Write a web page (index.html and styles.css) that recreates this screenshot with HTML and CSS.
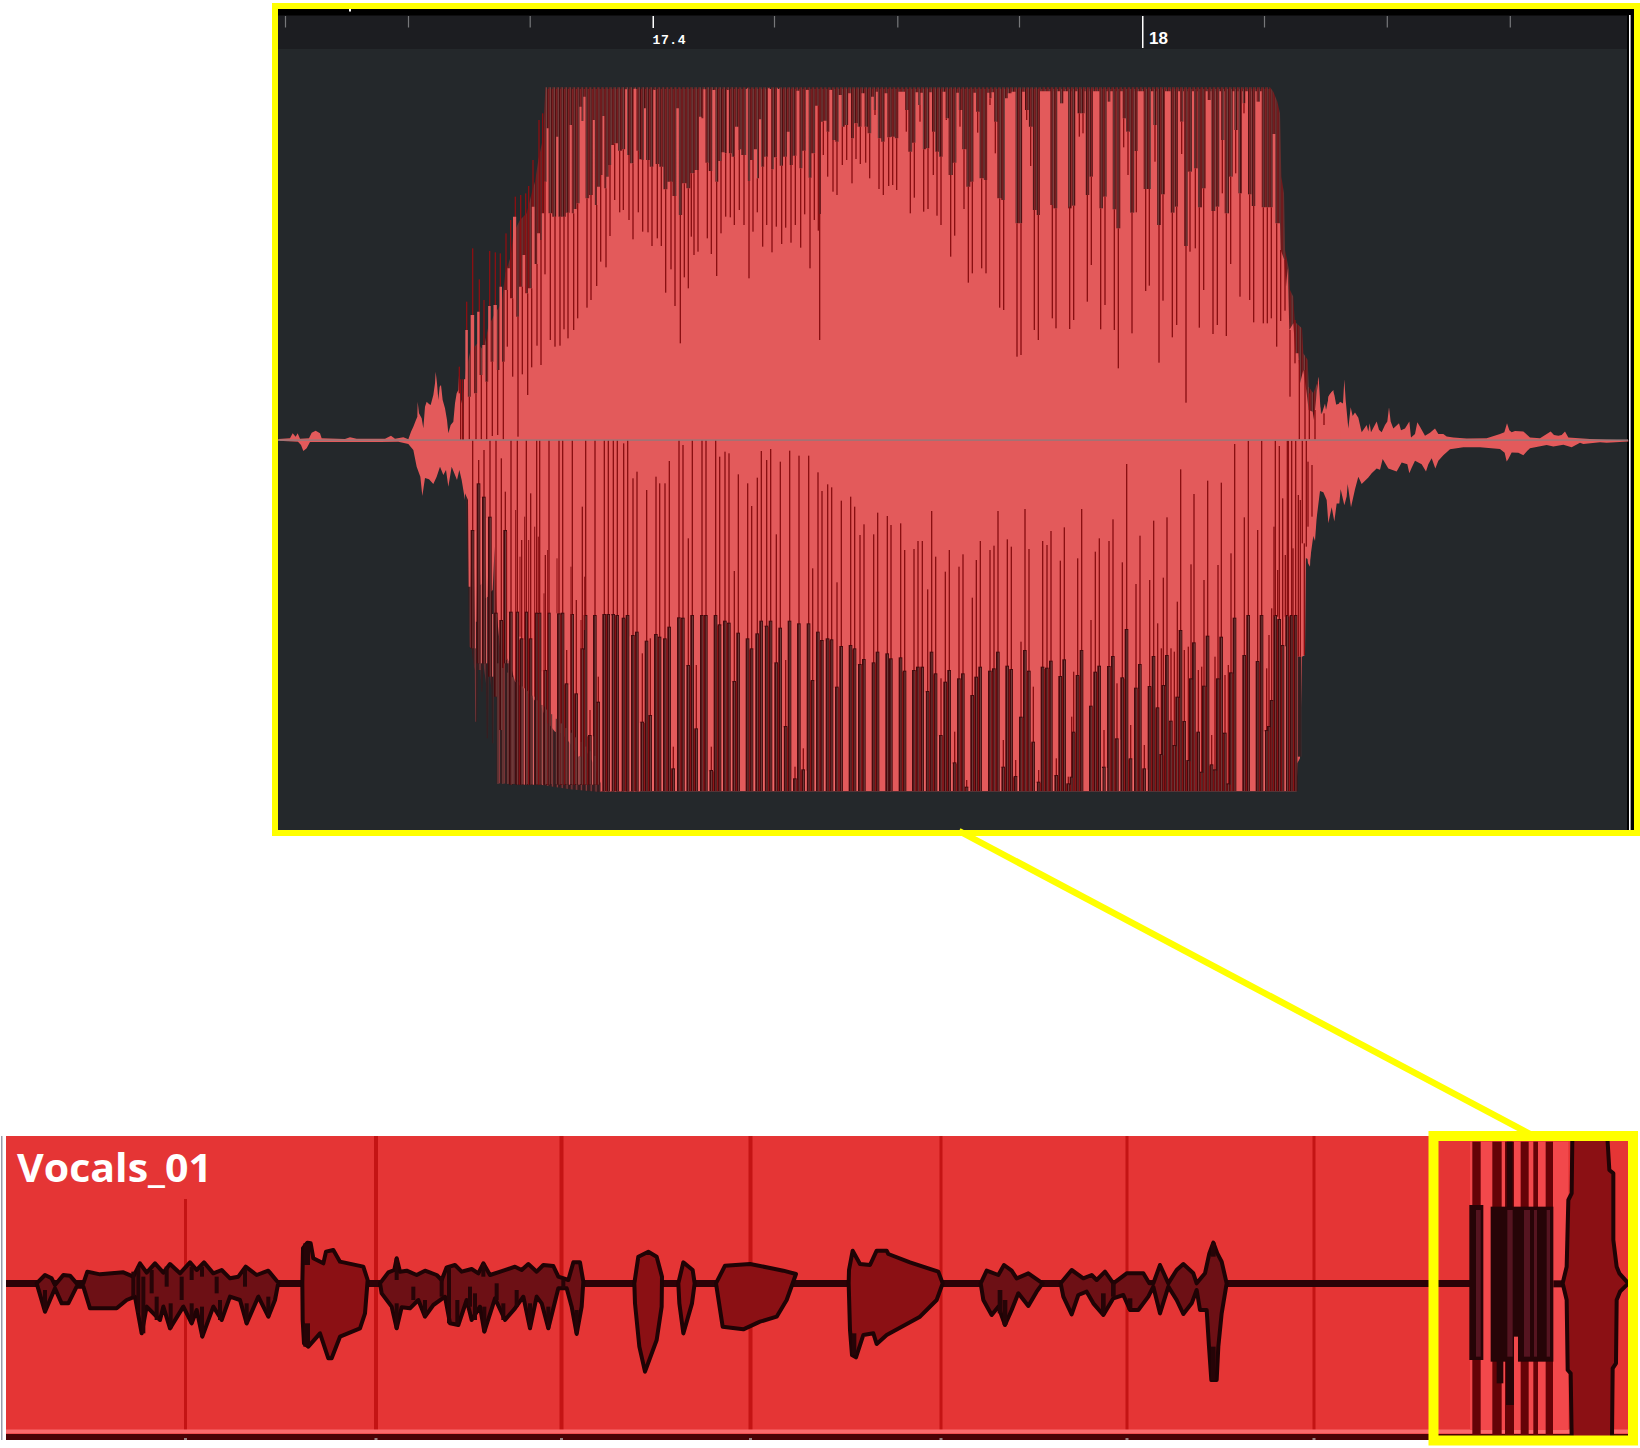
FILE: index.html
```html
<!DOCTYPE html>
<html lang="en">
<head>
<meta charset="utf-8">
<title>Vocals_01</title>
<link rel="stylesheet" href="styles.css">
</head>
<body>
<main class="page">
  <section class="detail">
    <svg class="detail-view" viewBox="278 9 1356 821" id="detail">
      <defs>
        <pattern id="stripes" width="12.15" height="40" patternUnits="userSpaceOnUse">
          <rect width="12.15" height="40" fill="#480a0d"/>
          <rect x="1" width="4" height="40" fill="#744240"/>
          <rect x="8" width="2.8" height="40" fill="#9b2c2e"/>
        </pattern>
        <pattern id="sparse" width="14.5" height="40" patternUnits="userSpaceOnUse">
          <rect width="14.5" height="40" fill="#2b2022"/>
          <rect x="2" width="4" height="40" fill="#8a383b"/>
          <rect x="10" width="2" height="40" fill="#4b1519"/>
        </pattern>
      </defs>
      <rect class="black" x="278" y="9" width="1356" height="821"/>
      <rect class="ruler" x="278" y="15.5" width="1349" height="34"/>
      <rect class="canvas" x="278" y="49" width="1349" height="781"/>
      <rect class="white" x="349" y="9" width="2" height="2.5"/>
      <g id="ticks"></g>
      <text class="beat" x="652.5" y="43.5" textLength="33">17.4</text>
      <text class="bar" x="1149" y="44" textLength="19">18</text>
      <g id="wave"></g>
      <rect class="zero" x="278" y="439.4" width="1350" height="1.4"/>
      <rect class="white" x="1629" y="15" width="1.6" height="815"/>
    </svg>
  </section>
  <section class="track">
    <svg class="track-view" viewBox="0 1136 1640 304" id="track">
      <rect class="edge" x="1" y="1136" width="1.5" height="304"/>
      <rect class="region" x="6" y="1136" width="1630" height="304"/>
      <g id="grid"></g>
      <rect class="lip" x="6" y="1429.5" width="1630" height="4"/>
      <rect class="base" x="6" y="1434" width="1630" height="6"/>
      <g id="dots"></g>
      <rect class="silence" x="6" y="1280" width="1490" height="7"/>
      <g id="clip"></g>
      <text class="name" x="17" y="1181.5" textLength="195" lengthAdjust="spacingAndGlyphs">Vocals_01</text>
    </svg>
  </section>
  <svg class="callout" viewBox="0 0 1640 1448">
    <path d="M959 831 L1530 1134"/>
    <rect x="1433.5" y="1136" width="199.5" height="304.5"/>
  </svg>
</main>
<script src="wave.js"></script>
</body>
</html>
```

FILE: styles.css
```css
body {
  margin: 0;
  background: #fff;
  overflow: hidden;
}

.page {
  position: relative;
  display: flex;
  flex-direction: column;
  width: 1640px;
  height: 1448px;
}

.detail {
  box-sizing: border-box;
  width: 1368px;
  height: 833px;
  margin: 3px 0 0 272px;
  border: 6px solid #ffff00;
}

.detail-view {
  display: block;
  width: 1356px;
  height: 821px;
}

.track {
  height: 304px;
  margin-top: 300px;
}

.track-view {
  display: block;
  width: 1640px;
  height: 304px;
}

.callout {
  position: absolute;
  inset: 0;
  width: 1640px;
  height: 1448px;
  fill: none;
  stroke: #ffff00;
}

.callout path { stroke-width: 6.5; }
.callout rect { stroke-width: 10; }

.black { fill: #000; }
.white { fill: #fff; }
.ruler { fill: #1c1d21; }
.canvas { fill: #24282b; }
.tick { fill: #77787b; }
.zero { fill: #95797a; }

.beat, .bar {
  fill: #fff;
  font: bold 13px "Liberation Mono", monospace;
}

.bar {
  font: bold 17px "Liberation Sans", sans-serif;
}

.light { fill: #e35a5b; }
.sides { fill: #e35a5b; }
.dark { fill: url(#stripes); }
.fade { fill: url(#sparse); }
.needle { fill: #8a0f12; }
.void { fill: #24282b; }
.column { fill: #450a0d; }
.core { fill: #6e3a39; }
.shine { fill: #ee6b6b; }

.edge { fill: #9a9dab; }
.region { fill: #e53535; }
.grid { fill: #c41414; }
.lip { fill: #fb6a6c; }
.base { fill: #4a0205; }
.dot { fill: #9c8080; }
.silence { fill: #2c0207; }

.blob {
  fill: #8b1014;
  stroke: #1f0305;
  stroke-width: 12;
  stroke-linejoin: round;
}

.busy { fill: #6d1015; }
.halo { fill: #f2484b; }
.stem { fill: #650307; }
.block { fill: #260407; }
.seam { fill: #551420; }

.name {
  fill: #fff;
  font: bold 40px "Open Sans", "Noto Sans", sans-serif;
}
```

FILE: wave.js
```js
const NS = 'http://www.w3.org/2000/svg';
const byId = id => document.getElementById(id);

function add(parent, tag, attrs) {
  const el = document.createElementNS(NS, tag);
  for (const k in attrs) el.setAttribute(k, attrs[k]);
  parent.appendChild(el);
  return el;
}
const rect = (p, cls, x, y, w, h) => add(p, 'rect', { class: cls, x, y, width: w, height: Math.max(h, 0) });
const poly = (p, cls, points) => add(p, 'polygon', { class: cls, points });
// A tile holds samples at three units per pixel.
const tile = (p, x, y, sy = 1 / 3) => add(p, 'g', { transform: `translate(${x} ${y}) scale(${1 / 3} ${sy})` });
const pairs = s => s.trim().split(/\s+/).map(t => t.split(',').map(Number));

// Ruler
[285.5, 408.5, 530.2, 774.5, 897.8, 1019.5, 1264.5, 1387.3, 1510.3].forEach(x => rect(byId('ticks'), 'tick', x - .6, 16, 1.2, 11.5));
rect(byId('ticks'), 'white', 652.5, 16, 1.5, 12);
rect(byId('ticks'), 'white', 1142, 16, 1.5, 32);

const wave = byId('wave');

// Each value holds to the midpoint between neighbouring samples.
function steps(g, data, end, floor, cls) {
  let d = `${data[0][0]},${floor}`;
  data.forEach(([x, y], i) => {
    const a = i ? (data[i - 1][0] + x) / 2 : x;
    const b = i < data.length - 1 ? (x + data[i + 1][0]) / 2 : end;
    d += ` ${a},${y} ${b},${y}`;
  });
  poly(g, cls, d + ` ${end},${floor}`);
}
function needlesDown(g, data, top) {
  data.forEach(([x, y]) => rect(g, 'needle', x - 2, top(x), 4, y - top(x)));
}
const nearest = data => x => {
  let best = data[0];
  data.forEach(p => { if (Math.abs(p[0] - x) < Math.abs(best[0] - x)) best = p; });
  return best[1];
};
function spikes(g, cls, data, floor, w) {
  data.forEach(([x, y]) => rect(g, cls, x - w / 2, Math.min(y, floor), w, Math.abs(floor - y)));
}

// Quiet lead-in and tail
const lead = tile(wave, 265, 0);
poly(lead, 'sides', '40,1317 75,1315 83,1300 92,1310 98,1300 105,1316 132,1315 140,1298 152,1292 165,1300 170,1315 240,1317 255,1312 275,1316 360,1316 378,1307 390,1316 415,1312 430,1318 438,1295 445,1280 452,1262 457,1250 458,1205 462,1240 470,1255 475,1285 480,1220 485,1205 492,1212 497,1215 505,1185 510,1150 512,1115 516,1150 520,1200 524,1160 528,1155 533,1200 540,1225 546,1260 550,1300 557,1275 565,1265 570,1210 575,1180 580,1170 583,1105 586,1190 592,1215 600,1320 600,1500 590,1440 583,1410 576,1440 560,1400 550,1460 543,1410 535,1425 525,1400 515,1430 505,1452 492,1438 480,1434 472,1488 466,1430 455,1400 445,1350 430,1332 400,1325 345,1326 240,1326 135,1326 125,1345 115,1353 108,1335 99,1325 40,1322');

const tail = tile(wave, 1300, 0, 1 / 2.8);
poly(tail, 'sides', '-10,1080 0,1000 5,1040 12,1040 18,1100 25,1150 35,1140 45,1150 50,1100 55,1055 58,1130 65,1160 75,1130 80,1160 85,1110 97,1095 103,1105 110,1140 120,1125 129,1130 133,1062 137,1120 145,1200 152,1140 158,1165 165,1155 175,1170 185,1210 200,1190 205,1208 209,1185 213,1210 230,1180 237,1203 245,1210 255,1190 262,1180 267,1140 272,1180 280,1200 297,1185 303,1205 315,1200 328,1180 333,1225 345,1215 352,1182 360,1195 375,1220 390,1212 405,1200 415,1215 430,1215 440,1222 460,1225 500,1228 560,1227 600,1215 613,1210 621,1185 628,1205 635,1210 645,1207 670,1208 690,1225 720,1227 752,1208 762,1218 775,1220 785,1218 795,1208 805,1225 870,1229 920,1231 985,1233 985,1236 920,1240 900,1238 850,1243 840,1240 815,1252 790,1245 760,1250 740,1246 690,1255 682,1262 670,1275 655,1268 635,1267 625,1285 620,1292 614,1268 600,1257 540,1252 490,1252 450,1258 430,1275 415,1290 406,1312 395,1283 385,1300 378,1320 365,1300 345,1290 335,1310 328,1325 322,1300 305,1295 290,1320 265,1312 248,1285 240,1315 230,1312 215,1325 205,1337 185,1355 175,1335 165,1370 153,1420 143,1355 140,1390 133,1415 122,1370 118,1410 110,1410 103,1460 95,1420 85,1465 80,1400 70,1378 60,1375 50,1450 45,1515 40,1500 30,1568 12,1560 0,1600 -10,1500');

// Upper half, first third
let g = tile(wave, 440, 60);
poly(g, 'dark', '68,1140 70,1000 78,930 92,870 104,860 112,850 130,870 145,800 165,760 185,730 196,640 212,590 220,520 240,480 260,460 275,400 285,365 295,300 310,230 316,82 900,82 900,1140');
spikes(g, 'needle', pairs('58,920 80,725 98,565 118,658 132,720 149,573 166,577 181,580 198,520 212,480 226,410 242,405 257,400 266,378 279,300 297,180 308,160'), 1000, 4);
const body1 = pairs('72,958 80,810 87,1010 97,765 108,1000 115,755 122,945 132,855 140,965 149,738 155,905 166,735 175,930 182,680 190,905 198,690 207,625 213,715 225,470 232,770 242,680 253,585 258,700 270,685 281,440 286,612 297,520 303,540 308,460 317,365 323,205 328,460 345,470 352,230 358,470 370,470 385,458 393,195 398,460 405,447 415,430 422,140 427,183 433,110 440,415 455,405 462,180 467,435 475,380 485,345 490,168 496,385 502,350 510,315 517,255 528,250 540,272 553,268 558,88 564,285 575,310 587,86 592,272 600,298 609,300 615,145 621,300 637,320 643,90 650,312 665,320 675,388 690,365 705,408 713,145 720,465 733,370 745,385 757,340 772,330 782,170 787,175 793,88 800,308 812,333 822,90 830,365 840,303 850,277 858,280 863,90 870,280 880,290 890,200 900,270');
steps(g, body1, 901, 1140, 'light');
needlesDown(g, pairs('62,1140 68,1140 88,1138 108,1138 124,1138 140,1138 157,1128 173,1125 190,1138 202,860 218,950 234,1130 247,943 263,1005 275,922 291,857 303,915 315,643 331,840 345,860 360,857 372,808 384,835 401,810 413,775 441,743 453,720 470,678 482,605 498,622 510,528 524,420 539,457 550,450 567,480 579,538 595,457 608,515 624,517 636,558 652,535 664,558 677,698 693,628 705,738 721,850 733,652 745,685 754,530 762,585 774,575 802,535 814,582 830,648 843,520 857,470 871,472 883,495 898,450'), nearest(body1));

// Upper half, middle
g = tile(wave, 740, 60);
rect(g, 'dark', 0, 82, 900, 500);
const body2 = pairs('0,268 7,285 16,285 21,85 26,363 35,300 48,268 54,355 60,178 67,320 78,290 90,85 96,328 107,292 115,85 123,317 135,290 146,215 152,315 165,287 174,92 182,325 192,272 203,90 209,353 220,280 231,137 239,462 247,185 255,182 264,215 272,90 281,240 291,245 301,105 309,200 320,195 329,100 337,235 347,190 359,200 370,100 377,200 389,220 398,110 405,150 410,95 417,235 430,245 438,100 446,232 459,230 470,235 480,95 491,95 499,150 511,275 522,248 531,97 538,135 545,98 552,268 564,265 572,97 580,215 591,275 603,290 613,95 620,175 632,345 645,308 653,98 660,150 673,268 685,380 697,365 704,98 712,155 725,355 738,360 745,98 751,115 758,97 766,185 778,415 790,420 800,115 807,100 822,95 831,490 843,490 850,95 860,150 873,200 884,450 896,465');
steps(g, body2, 901, 1140, 'light');
needlesDown(g, pairs('12,495 27,655 39,515 52,457 68,560 80,495 96,577 109,500 125,552 137,503 153,548 166,495 182,563 194,463 210,625 223,480 235,512 239,840 250,285 263,350 279,395 291,405 307,315 320,300 336,370 348,297 361,312 377,308 389,355 405,165 417,387 430,405 446,378 458,375 470,390 499,215 511,460 523,413 540,185 551,455 564,447 580,345 591,467 603,495 619,180 632,590 644,527 660,200 672,447 685,668 697,640 713,218 725,625 738,640 750,135 766,280 779,743 791,750 831,890 843,885 860,180 872,318 883,810 895,840'), nearest(body2));

// Upper half, last third
g = tile(wave, 1040, 60);
poly(g, 'dark', '0,82 690,82 700,95 712,125 720,160 724,350 732,400 735,570 747,630 750,690 760,710 764,785 786,805 790,880 803,900 806,980 820,1000 835,960 842,1060 842,1140 0,1140');
poly(g, 'light', '0,94 665,94 665,442 698,442 698,222 706,222 706,490 720,490 722,570 733,600 738,680 743,625 748,810 760,790 766,880 775,880 780,970 790,930 800,1000 806,1050 818,1055 822,1080 830,1000 836,950 842,1060 850,1070 858,1050 868,1005 880,990 885,1035 902,1030 902,1140 0,1140');
pairs('31,40,435 40,52,445 60,70,130 84,95,445 95,106,437 112,134,160 137,148,405 148,159,350 178,189,445 189,200,410 203,211,125 218,229,448 229,241,505 248,258,175 258,270,215 270,283,458 283,293,273 311,333,387 340,350,195 351,363,495 363,375,403 392,404,458 404,414,440 420,430,185 432,443,558 443,456,335 462,473,325 474,486,442 486,497,385 503,512,120 514,526,453 526,538,440 543,553,240 554,567,460 567,578,350 583,593,210 595,606,400 608,616,130 624,635,403 635,646,438 650,660,125')
  .forEach(([a, b, y]) => rect(g, 'dark', a, 86, b - a, y - 86));
const lines4 = pairs('37,775,435 48,805,445 89,807,440 101,780,437 118,230,160 129,220,160 142,725,405 154,615,350 182,808,445 195,735,410 223,810,448 235,925,505 251,262,175 264,345,215 276,820,458 289,457,273 317,693,387 328,677,387 345,305,195 357,908,495 369,722,403 397,832,458 410,795,440 425,282,185 438,1028,558 450,575,335 466,565,325 478,803,442 491,690,385 519,822,453 532,795,440 547,400,240 559,828,460 572,612,350 587,340,210 600,710,400 612,160,130 629,720,403 641,787,438 670,790,442 682,790,442 694,775,442 710,860,490 722,783,570 735,752,600 750,1010,810 765,910,780 778,1138,900 795,1138,930 808,1138,1000 825,1138,1050 852,1095,1060');
lines4.forEach(([x, y, t]) => rect(g, 'needle', x - 2, t, 4, y - t));
for (let x = 547; x < 1270; x += 4.05) rect(wave, 'void', x, 86, 1.4, 3);

// Lower half: every column is x, top of the dark part, tip of the needle, optional foot
function columns(g, data, floor) {
  data.forEach(([x, top, tip, foot = floor]) => {
    rect(g, 'needle', x - 2, tip, 4, top - tip + 2);
    rect(g, 'column', x - 6, top, 11, foot - top);
  });
  data.forEach(([x, top, , foot = floor]) => rect(g, 'core', x - 1, top + 3, 3.5, foot - top - 3));
  // Close columns share a reddish seam, wider gaps a bright one
  data.forEach(([x, top, , foot = floor], i) => {
    const next = data[i + 1];
    if (!next) return;
    const start = Math.max(top, next[1]) + 4;
    if (next[0] - x < 14) rect(g, 'needle', x + 4.5, start, 3, foot - start);
    else if (next[0] - x < 19) rect(g, 'shine', x + 6.5, start, 3, foot - start);
  });
}
g = tile(wave, 440, 430);
poly(g, 'fade', '78,30 78,210 84,470 88,650 94,655 100,700 104,720 106,875 111,875 113,720 122,720 124,785 127,785 130,700 138,760 140,925 144,925 147,720 155,780 156,940 160,940 163,730 170,800 170,1060 300,1064 390,1078 480,1086 600,1086 600,30');
poly(g, 'light', '75,30 75,190 84,210 86,470 92,470 94,335 100,300 105,575 110,575 114,160 121,465 127,460 132,200 137,505 143,500 147,260 153,485 158,480 164,350 170,548 180,650 186,570 192,670 210,700 225,755 250,775 275,800 305,835 325,880 345,905 365,910 390,940 415,980 440,965 460,1000 482,1060 482,1084 1352,1084 1352,30');
columns(g, pairs('98,300,30,655 116,160,90,700 132,200,60,700 150,260,30,740 168,548,30,800'), 1064);
columns(g, pairs('184,570,85,900 196,300,185,700 213,545,30 232,545,30 245,625,330 259,545,30 272,625,190 290,548,30 299,548,30 316,720,375 327,548,30 357,550,30 368,548,30 380,760,660 397,552,30 409,790,510 427,655,230 437,555,30 450,915,840 465,555,30 475,815,740'), 1064);
for (let x = 172; x < 470; x += 14.6) {
  const top = 700 + (x - 172) * .95;
  rect(g, 'core', x, top, 4, 1062 - top);
}
columns(g, pairs('493,552,30 505,552,30 520,552,30 532,555,30 551,563,40 563,555,30 579,615,145 591,605,125 607,875,670 620,632,180 631,855,625 648,612,140 659,620,160 675,625,160 688,590,93 700,1015,950 717,562,30 729,563,45 745,705,325 757,555,30 769,895,705 786,555,30 798,555,30 814,1020,950 827,555,30 839,583,80 855,572,65 867,578,70 883,753,423 895,608,133 923,625,160 935,655,228 952,610,143 964,572,63 980,587,90 992,572,57 1009,697,313 1021,593,95 1037,888,690 1049,572,62 1065,1045,1010 1077,580,77 1090,1018,955 1106,580,77 1118,750,415 1134,605,127 1146,630,183 1163,625,163 1175,628,172 1191,770,457 1204,648,212 1232,645,200 1244,655,230 1260,702,315 1272,687,283 1301,697,313 1313,665,248 1342,670,258'), 1083);
[[227, 240, 750], [295, 320, 548], [351, 385, 550], [393, 410, 900], [423, 570, 980], [434, 440, 600], [200, 305, 690], [240, 380, 620], [254, 260, 775], [266, 330, 780], [284, 290, 800], [312, 490, 830], [323, 360, 880]].forEach(([x, a, b]) => rect(g, 'needle', x - 1.5, a, 3, b - a));

g = tile(wave, 890, 430);
poly(g, 'light', '0,30 1282,30 1282,190 1280,250 1272,330 1266,260 1260,410 1254,400 1248,350 1245,675 1236,680 1230,985 1222,1000 1220,1084 0,1084');
columns(g, pairs('3,685,285 32,682,280 44,722,360 72,720,357 84,710,333 97,710,333 113,783,478 125,665,243 137,730,380 153,915,745 166,755,425 178,720,360 194,997,905 207,745,410 219,730,373 230,1070,1050 247,795,503 259,740,390 271,710,333 300,722,360 312,715,347 324,665,243 340,1010,930 352,707,328 364,717,350 377,1038,990 393,860,635 405,660,237 417,722,357 430,935,770 446,1055,1020 458,710,333 471,713,345 483,692,303 499,1035,985 511,738,392 523,688,292 535,1060,1040 545,1040,860 551,905,725 563,735,385 575,660,237 603,827,570 616,725,365 628,707,325 642,1010,900 657,708,333 669,678,268 681,925,760 697,742,397 710,597,102 722,985,885 738,773,462 750,702,317 763,1015,945 779,768,450 791,678,272 803,832,580 814,972,655 820,765,443 831,675,262 843,872,655 853,945,665 862,800,515 872,600,118 883,873,660 895,990,650 903,745,403 912,637,192 925,905,720 935,1025,710 942,767,450 953,617,152 965,1003,915 975,1018,680 984,745,405 994,620,158 1005,908,735 1015,1060,705 1023,727,370 1034,563,42 1063,675,262 1075,555,32 1103,693,300 1115,555,32 1130,900,715 1137,888,615 1145,810,535 1156,555,32 1168,567,48 1178,645,205 1192,555,32 1205,555,32 1217,555,32'), 1083);
[[1152, 290, 560], [1163, 420, 560], [1186, 375, 560], [1195, 32, 560], [1209, 355, 560], [1225, 195, 680], [1231, 210, 680], [1237, 32, 340], [1243, 340, 675], [1249, 32, 350], [1254, 95, 290], [1266, 105, 260]].forEach(([x, a, b]) => rect(g, 'needle', x - 2, a, 4, b - a));
rect(g, 'fade', 1222, 680, 12, 300);

// Track region
[[185.5, 1199, 3], [376, 1136, 4], [561.5, 1136, 4], [750.5, 1136, 4], [941, 1136, 3], [1127, 1136, 3], [1314, 1136, 3]].forEach(([x, y, w]) => {
  rect(byId('grid'), 'grid', x - w / 2, y, w, 1430 - y);
  rect(byId('dots'), 'dot', x - 1.5, 1438, 3, 2);
});
const clip = byId('clip');
g = tile(clip, 0, 1120);
poly(g, 'blob busy', '110,490 135,465 155,475 165,495 190,465 210,467 230,490 250,490 262,455 300,463 370,457 400,470 420,430 440,458 465,430 490,458 510,432 540,460 570,427 590,450 612,427 640,460 665,450 690,475 715,470 737,440 770,465 805,452 835,488 825,540 805,590 775,530 740,610 720,540 690,530 665,600 640,560 607,650 590,570 575,610 550,560 510,625 490,560 480,600 440,560 425,640 405,530 380,540 350,565 270,565 250,500 230,500 205,550 185,550 165,505 135,575');
[[135, 510, 575], [400, 455, 530], [415, 440, 580], [430, 470, 640], [455, 450, 520], [470, 530, 600], [500, 440, 500], [512, 550, 625], [545, 470, 540], [575, 440, 480], [575, 550, 610], [606, 440, 470], [606, 560, 650], [650, 470, 520], [660, 540, 600], [735, 450, 500], [740, 550, 610], [805, 530, 590]].forEach(([x, a, b]) => rect(g, 'block', x - 6, a, 12, b - a));
poly(g, 'blob', '907,490 909,385 922,368 932,370 940,415 970,430 978,395 1000,390 1020,425 1090,440 1103,480 1095,580 1080,625 1020,650 995,715 985,715 960,640 925,680 912,670 908,600');
rect(g, 'block', 910, 370, 20, 65);
rect(g, 'block', 910, 610, 20, 70);
g = tile(clip, 400, 1220);
poly(g, 'blob busy', '-60,190 -35,157 -17,150 -10,115 0,155 20,152 50,165 75,152 110,165 125,180 140,142 165,135 185,155 215,147 235,160 250,130 270,165 310,152 345,140 365,150 385,132 410,155 430,135 460,138 475,170 505,180 520,127 540,127 550,185 545,260 530,342 515,260 500,205 475,205 445,325 425,250 410,230 390,325 370,230 345,265 315,300 285,235 253,335 240,260 215,300 200,240 175,315 150,310 135,230 100,255 75,290 55,240 30,265 5,262 -10,325 -25,260 -55,220');
[[-10, 115, 180], [-10, 250, 325], [40, 200, 240], [75, 240, 290], [125, 170, 230], [147, 140, 310], [172, 240, 315], [210, 200, 260], [225, 220, 300], [250, 130, 170], [253, 260, 335], [290, 190, 240], [310, 250, 300], [350, 210, 260], [390, 250, 325], [445, 260, 325], [490, 180, 205], [530, 270, 340]].forEach(([x, a, b]) => rect(g, 'block', x - 6, a, 12, b - a));
poly(g, 'blob', '703,190 715,110 745,95 770,110 786,170 785,260 770,360 735,455 718,380 705,250');
poly(g, 'blob', '835,190 850,127 878,150 884,190 876,250 850,340 838,250');
poly(g, 'blob', '948,190 975,137 1050,132 1150,152 1188,162 1160,240 1130,290 1080,305 1030,328 968,320');
g = tile(clip, 820, 1220);
poly(g, 'blob', '86,190 87,150 98,92 120,132 150,135 170,92 200,92 205,102 270,127 355,155 368,190 350,240 300,290 200,345 170,372 160,340 130,345 108,412 96,405 90,330');
poly(g, 'blob busy', '482,190 500,152 535,165 552,135 575,152 590,175 625,160 668,190 650,215 625,258 595,220 575,270 555,315 535,260 515,285 490,240');
poly(g, 'blob busy', '722,190 755,150 790,175 815,165 830,180 855,155 880,190 920,160 970,160 988,190 1000,190 1020,135 1045,190 1070,150 1090,132 1120,160 1130,190 1155,160 1168,100 1180,68 1192,100 1205,125 1220,190 1205,280 1195,380 1190,480 1174,480 1167,380 1160,270 1140,270 1130,210 1115,250 1090,282 1070,240 1045,200 1020,280 1000,200 985,230 955,270 930,270 910,225 880,235 850,285 820,250 800,215 775,225 755,283 730,230');
[[102, 340, 405], [540, 210, 280], [555, 240, 315], [850, 220, 285], [880, 190, 230], [930, 235, 270], [1180, 68, 110], [1180, 380, 480]].forEach(([x, a, b]) => rect(g, 'block', x - 7, a, 14, b - a));

// Clipped burst at the end of the region
g = tile(clip, 1400, 1110);
rect(g, 'halo', 210, 95, 295, 865);
[[217, 25], [277, 28], [315, 27], [362, 24], [400, 14], [437, 22]].forEach(([x, w]) => rect(g, 'stem', x, 95, w, 880));
rect(g, 'block', 320, 95, 18, 200);
rect(g, 'block', 208, 285, 42, 465);
rect(g, 'block', 272, 290, 188, 465);
[[228, 14], [322, 16], [372, 18], [402, 9], [440, 10]].forEach(([x, w]) => rect(g, 'seam', x, 300, w, 440));
rect(g, 'block', 290, 750, 20, 70);
rect(g, 'block', 318, 750, 24, 135);
rect(g, 'halo', 342, 680, 12, 280);
rect(g, 'silence', 460, 511, 30, 21);
poly(g, 'blob', '517,80 622,80 628,180 640,190 640,390 650,470 658,490 685,520 660,545 650,570 648,760 638,775 636,985 515,985 512,790 503,780 500,570 488,520 500,470 505,270 515,250');
```
